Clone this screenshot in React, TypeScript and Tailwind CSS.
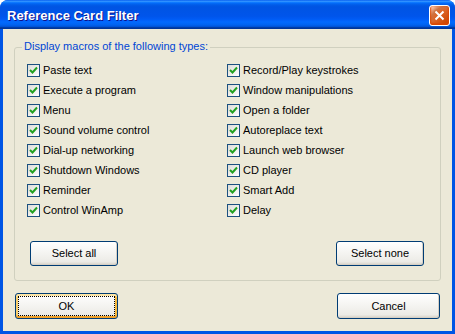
import React from "react";

const leftItems = [
  "Paste text",
  "Execute a program",
  "Menu",
  "Sound volume control",
  "Dial-up networking",
  "Shutdown Windows",
  "Reminder",
  "Control WinAmp",
];

const rightItems = [
  "Record/Play keystrokes",
  "Window manipulations",
  "Open a folder",
  "Autoreplace text",
  "Launch web browser",
  "CD player",
  "Smart Add",
  "Delay",
];

const CheckBox = ({ label }: { label: string }) => (
  <div className="flex h-[13px] items-center gap-[3px]">
    <span className="flex h-[13px] w-[13px] shrink-0 items-center justify-center border border-[#1C5180] bg-[linear-gradient(135deg,#DCDCD7,#FFFFFF)]">
      <svg width="9" height="9" viewBox="0 0 9 9">
        <path d="M1 4 L3.5 6.5 L8 1.5" fill="none" stroke="#21A121" strokeWidth="2" />
      </svg>
    </span>
    <span className="whitespace-nowrap text-[11px] leading-[13px] text-black">{label}</span>
  </div>
);

const XpButton = ({
  children,
  width,
  height,
  isDefault,
}: {
  children: React.ReactNode;
  width: string;
  height: string;
  isDefault?: boolean;
}) => (
  <button
    className={`${width} ${height} rounded-[3px] border border-[#003C74] bg-[linear-gradient(180deg,#FFFFFF,#ECEBE6_86%,#D6D0C5)] text-[11px] text-black ${
      isDefault
        ? "shadow-[inset_0_-2px_#F0A12A,inset_0_2px_#FDE6A8,inset_2px_0_#F9CE6A,inset_-2px_0_#F6B93F] outline-1 outline-dotted outline-offset-[-4px] outline-black"
        : "shadow-[inset_-1px_-1px_#D6D0C5]"
    }`}
  >
    {children}
  </button>
);

export default function App() {
  return (
    <div className="h-[334px] w-[455px] bg-white font-['Liberation_Sans',Arial,sans-serif]">
      <div className="flex h-full flex-col overflow-hidden rounded-t-[8px] bg-[#0055E5]">
        {/* Title bar */}
        <div className="flex h-[29px] shrink-0 items-center justify-between bg-[linear-gradient(180deg,#0058EE_0%,#3593FF_4%,#288EFF_6%,#127DFF_8%,#036FFC_10%,#0262EE_14%,#0057E5_20%,#0054E3_24%,#0055EB_56%,#005BF5_66%,#026AFE_76%,#0062EF_86%,#0052D6_92%,#0040AB_94%,#003092_100%)] pl-[7px] pr-[5px]">
          <span className="pt-[3px] text-[13px] font-bold text-white [text-shadow:1px_1px_#0F1089]">
            Reference Card Filter
          </span>
          <button className="mt-[1px] flex h-[21px] w-[21px] items-center justify-center rounded-[3px] border border-white bg-[radial-gradient(circle_at_90%_90%,#CC4600_0%,#DC6527_55%,#CD7546_70%,#FFCCB2_90%,#FFFFFF_100%)] shadow-[inset_0_-1px_2px_1px_#DA4600]">
            <svg width="11" height="11" viewBox="0 0 11 11">
              <path d="M1.5 1.5 L9.5 9.5 M9.5 1.5 L1.5 9.5" stroke="white" strokeWidth="2" />
            </svg>
          </button>
        </div>

        {/* Body */}
        <div className="mx-[3px] mb-[3px] flex-1 bg-[#ECE9D8] px-[11px] pt-[18px]">
          <div className="relative flex h-[234px] w-[427px] flex-col rounded-[3px] border border-[#D0D0BF] pl-[12px] pt-[16px]">
            <span className="absolute left-[7px] top-[-8px] bg-[#ECE9D8] px-[2px] text-[11px] leading-[13px] text-[#0046D5]">
              Display macros of the following types:
            </span>
            <div className="grid grid-cols-[200px_1fr] gap-y-[7px]">
              {leftItems.map((l, i) => (
                <React.Fragment key={l}>
                  <CheckBox label={l} />
                  <CheckBox label={rightItems[i]} />
                </React.Fragment>
              ))}
            </div>
            <div className="ml-[3px] mr-[16px] mt-[24px] flex justify-between">
              <XpButton width="w-[88px]" height="h-[25px]">Select all</XpButton>
              <XpButton width="w-[88px]" height="h-[25px]">Select none</XpButton>
            </div>
          </div>

          <div className="mt-[12px] flex justify-between px-[1px]">
            <XpButton width="w-[103px]" height="h-[26px]" isDefault>
              OK
            </XpButton>
            <XpButton width="w-[103px]" height="h-[26px]">Cancel</XpButton>
          </div>
        </div>
      </div>
    </div>
  );
}
